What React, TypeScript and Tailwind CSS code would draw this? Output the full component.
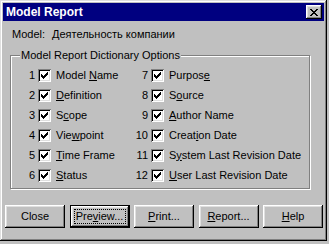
import React from 'react'

const FONT = { fontFamily: '"Liberation Sans", Arial, sans-serif' }

type Item = { n: number; pre: string; key: string; post: string }

const LEFT: Item[] = [
  { n: 1, pre: 'Model ', key: 'N', post: 'ame' },
  { n: 2, pre: '', key: 'D', post: 'efinition' },
  { n: 3, pre: 'S', key: 'c', post: 'ope' },
  { n: 4, pre: 'Vie', key: 'w', post: 'point' },
  { n: 5, pre: '', key: 'T', post: 'ime Frame' },
  { n: 6, pre: '', key: 'S', post: 'tatus' },
]

const RIGHT: Item[] = [
  { n: 7, pre: 'Purpos', key: 'e', post: '' },
  { n: 8, pre: 'S', key: 'o', post: 'urce' },
  { n: 9, pre: '', key: 'A', post: 'uthor Name' },
  { n: 10, pre: 'Creat', key: 'i', post: 'on Date' },
  { n: 11, pre: 'S', key: 'y', post: 'stem Last Revision Date' },
  { n: 12, pre: '', key: 'U', post: 'ser Last Revision Date' },
]

function Check() {
  return (
    <div className="w-[13px] h-[13px] shrink-0 bg-white shadow-[inset_1px_1px_0_#808080,inset_-1px_-1px_0_#fff,inset_2px_2px_0_#000,inset_-2px_-2px_0_#dfdfdf]">
      <svg width="13" height="13" viewBox="0 0 13 13" shapeRendering="crispEdges">
        <path
          fill="#000"
          d="M9 3h1v1h-1zM8 4h2v1h-2zM3 5h1v1h-1zM7 5h3v1h-3zM3 6h2v1h-2zM6 6h3v1h-3zM3 7h5v1h-5zM4 8h3v1h-3zM5 9h1v1h-1z"
        />
      </svg>
    </div>
  )
}

function Row({ item }: { item: Item }) {
  return (
    <div className="h-[20px] flex items-center">
      <span className="w-[24px] text-right">{item.n}</span>
      <div className="ml-[3px]"><Check /></div>
      <span className="ml-[5px] whitespace-nowrap">
        {item.pre}<u className="underline-offset-1">{item.key}</u>{item.post}
      </span>
    </div>
  )
}

function Button({ children, focused }: { children: React.ReactNode; focused?: boolean }) {
  if (focused) {
    return (
      <div className="w-[60px] h-[23px] border border-black bg-[#c0c0c0]">
        <div className="w-full h-full p-[3px] shadow-[inset_-1px_-1px_0_#000,inset_1px_1px_0_#fff,inset_-2px_-2px_0_#808080,inset_2px_2px_0_#dfdfdf]">
          <div className="w-full h-full border border-dotted border-black flex items-center justify-center">
            {children}
          </div>
        </div>
      </div>
    )
  }
  return (
    <div className="w-[60px] h-[23px] bg-[#c0c0c0] flex items-center justify-center shadow-[inset_-1px_-1px_0_#000,inset_1px_1px_0_#fff,inset_-2px_-2px_0_#808080,inset_2px_2px_0_#dfdfdf]">
      {children}
    </div>
  )
}

export default function App() {
  return (
    <div className="w-[329px] h-[244px] bg-[#c0c0c0] text-[11px] leading-[13px] text-black" style={FONT}>
      <div className="w-[327px] h-[241px] p-[3px] flex flex-col bg-[#c0c0c0] shadow-[inset_-1px_-1px_0_#000,inset_1px_1px_0_#dfdfdf,inset_-2px_-2px_0_#808080,inset_2px_2px_0_#fff]">

        {/* Title bar */}
        <div className="h-[18px] bg-[#000080] flex items-center justify-between pl-[3px] pr-[2px]">
          <span className="text-white font-bold text-[12px]">Model Report</span>
          <div className="w-[16px] h-[14px] bg-[#c0c0c0] flex items-center justify-center shadow-[inset_-1px_-1px_0_#000,inset_1px_1px_0_#fff,inset_-2px_-2px_0_#808080,inset_2px_2px_0_#dfdfdf]">
            <svg width="8" height="7" viewBox="0 0 8 7" shapeRendering="crispEdges">
              <path fill="#000" d="M0 0h2v1h-2zM6 0h2v1h-2zM1 1h2v1h-2zM5 1h2v1h-2zM2 2h4v1h-4zM3 3h2v1h-2zM2 4h4v1h-4zM1 5h2v1h-2zM5 5h2v1h-2zM0 6h2v1h-2zM6 6h2v1h-2z" />
            </svg>
          </div>
        </div>

        {/* Model */}
        <div className="mt-[7px] ml-[9px] flex">
          <span className="w-[40px]">Model:</span>
          <span>Деятельность компании</span>
        </div>

        {/* Options group */}
        <div className="relative mt-[14px] ml-[7px] w-[300px] h-[134px] border border-[#808080] shadow-[1px_1px_0_#fff,inset_1px_1px_0_#fff]">
          <span className="absolute -top-[7px] left-[9px] bg-[#c0c0c0] px-[1px]">Model Report Dictionary Options</span>
          <div className="pt-[9px] flex">
            <div className="w-[113px]">
              {LEFT.map((it) => <Row key={it.n} item={it} />)}
            </div>
            <div>
              {RIGHT.map((it) => <Row key={it.n} item={it} />)}
            </div>
          </div>
        </div>

        {/* Buttons */}
        <div className="mt-[16px] ml-[2px] w-[318px] flex justify-between">
          <Button>Close</Button>
          <Button focused>Pre<u>v</u>iew...</Button>
          <Button><u>P</u>rint...</Button>
          <Button><u>R</u>eport...</Button>
          <Button><u>H</u>elp</Button>
        </div>
      </div>
    </div>
  )
}
